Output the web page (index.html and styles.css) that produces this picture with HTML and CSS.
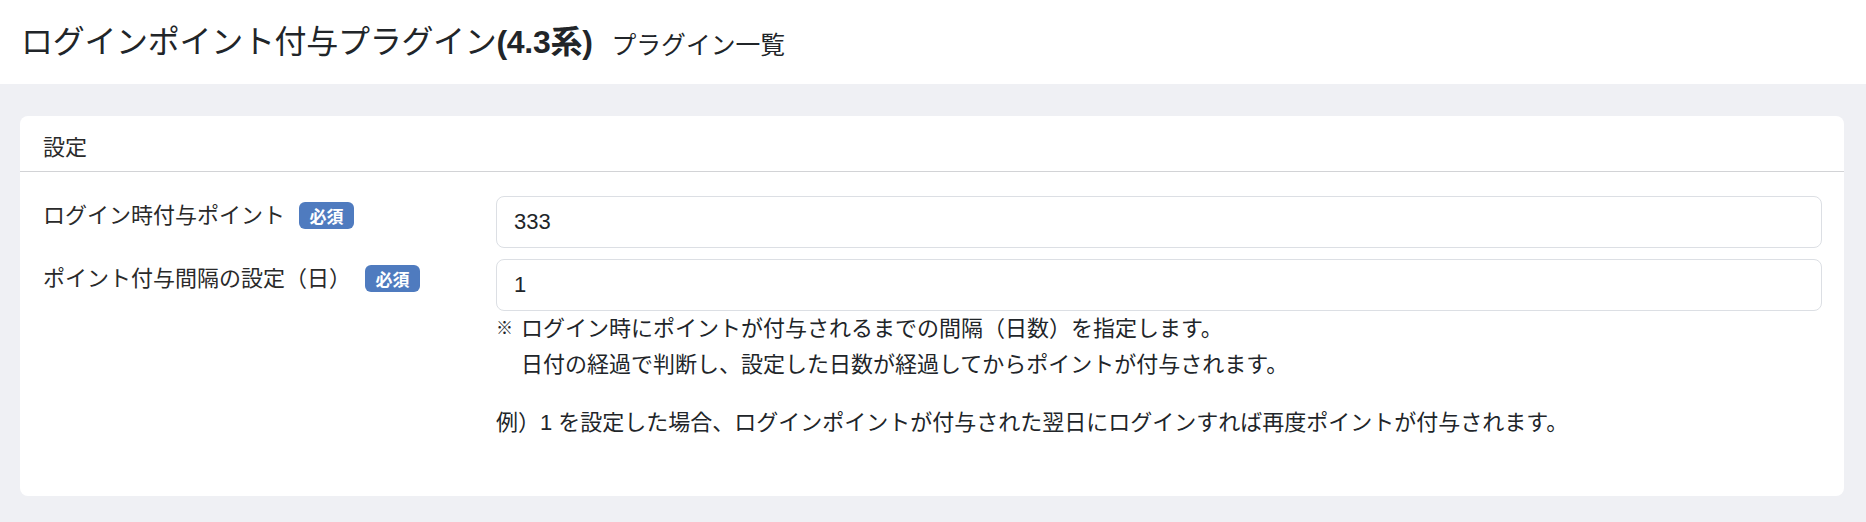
FILE: index.html
```html
<!DOCTYPE html>
<html lang="ja">
<head>
<meta charset="utf-8">
<title>ログインポイント付与プラグイン</title>
<link rel="stylesheet" href="styles.css">
</head>
<body>
<header class="page-header">
  <h1 class="page-title">ログインポイント付与プラグイン<span class="ver">(4.3系)</span></h1>
  <span class="page-sub">プラグイン一覧</span>
</header>
<main class="content">
  <section class="card">
    <div class="card-header">設定</div>
    <div class="card-body">
      <div class="form-row">
        <label class="form-label">ログイン時付与ポイント<span class="badge">必須</span></label>
        <div class="form-field">
          <input class="form-input" type="text" value="333">
        </div>
      </div>
      <div class="form-row">
        <label class="form-label">ポイント付与間隔の設定（日）<span class="badge">必須</span></label>
        <div class="form-field">
          <input class="form-input" type="text" value="1">
          <div class="help">
            <div class="note"><span class="mark">※</span><span class="note-text">ログイン時にポイントが付与されるまでの間隔（日数）を指定します。<br>日付の経過で判断し、設定した日数が経過してからポイントが付与されます。</span></div>
            <p class="example">例）1 を設定した場合、ログインポイントが付与された翌日にログインすれば再度ポイントが付与されます。</p>
          </div>
        </div>
      </div>
    </div>
  </section>
</main>
</body>
</html>
```
FILE: styles.css
```css
* { box-sizing: border-box; }
html, body { margin: 0; padding: 0; }
body {
  background: #eff0f4;
  font-family: "Liberation Sans", "Noto Sans CJK JP", sans-serif;
  color: #212529;
  width: 1866px;
  height: 522px;
  overflow: hidden;
}
.page-header {
  background: #ffffff;
  height: 84px;
  display: flex;
  align-items: center;
  padding-left: 21px;
  gap: 19px;
}
.page-title {
  margin: 0;
  font-size: 32px;
  font-weight: 400;
  line-height: 1.2;
  color: #212529;
  letter-spacing: -0.3px;
}
.ver { font-weight: 700; }
.page-sub {
  font-size: 24.8px;
  color: #212529;
  padding-top: 2px;
}
.content {
  padding: 32px 22px 0 20px;
}
.card {
  background: #ffffff;
  border-radius: 8px;
  height: 380px;
}
.card-header {
  height: 56px;
  border-bottom: 1px solid #d2d3d6;
  display: flex;
  align-items: center;
  padding-left: 23px;
  font-size: 22px;
  color: #2a2a2a;
  padding-top: 2px;
}
.card-body {
  padding: 24px 22px 0 23px;
  display: flex;
  flex-direction: column;
  gap: 11px;
}
.form-row {
  display: grid;
  grid-template-columns: 453px 1fr;
}
.form-label {
  font-size: 22px;
  line-height: 33px;
  color: #2a2a2a;
  padding-top: 2px;
  display: flex;
  align-items: center;
  align-self: start;
  height: 36px;
}
.badge {
  display: inline-flex;
  align-items: center;
  justify-content: center;
  width: 55px;
  height: 27px;
  margin-left: 14px;
  background: #4f7bbf;
  color: #ffffff;
  border-radius: 6px;
  font-size: 17px;
  font-weight: 700;
  font-family: "Noto Sans CJK JP", sans-serif;
  line-height: 1;
}
.form-input {
  display: block;
  width: 100%;
  height: 52px;
  border: 1px solid #dcdfe4;
  border-radius: 8px;
  padding: 0 17px;
  font-family: "Liberation Sans", "Noto Sans CJK JP", sans-serif;
  font-size: 22px;
  color: #212529;
  background: #fff;
  outline: none;
}
.help {
  font-size: 22px;
  line-height: 35.5px;
  color: #212529;
}
.note {
  display: flex;
}
.mark {
  width: 25px;
  flex: none;
  font-size: 17px;
  font-weight: 700;
}
.example {
  margin: 23px 0 0 0;
}
```
